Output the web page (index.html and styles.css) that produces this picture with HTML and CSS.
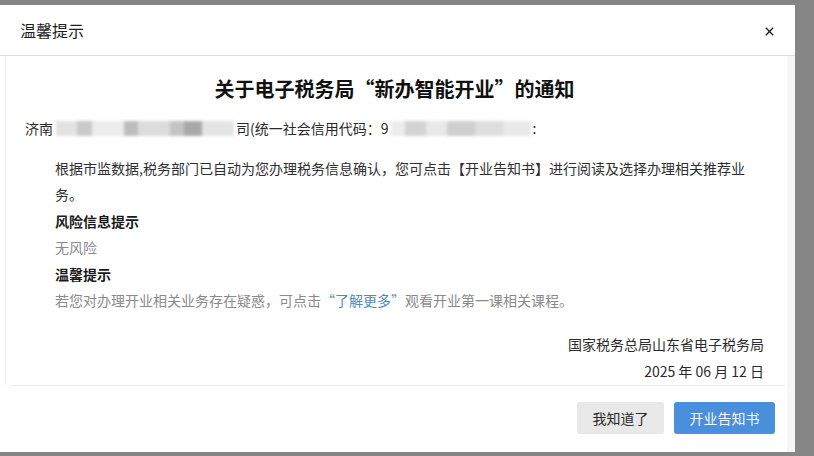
FILE: index.html
```html
<!DOCTYPE html>
<html lang="zh-CN">
<head>
<meta charset="utf-8">
<title>温馨提示</title>
<link rel="stylesheet" href="styles.css">
</head>
<body>
<div class="modal">
  <div class="modal-header">
    <span class="modal-title">温馨提示</span>
    <span class="close" aria-label="关闭">
      <svg width="9" height="9" viewBox="0 0 9 9"><path d="M0.8 0.8 L8.2 8.2 M8.2 0.8 L0.8 8.2" stroke="#222" stroke-width="1.4" fill="none"/></svg>
    </span>
  </div>
  <div class="modal-main">
    <div class="modal-body">
      <h1 class="notice-title">关于电子税务局“新办智能开业”的通知</h1>
      <div class="addressee">济南<span class="mosaic m1"></span>司(统一社会信用代码：9<span class="mosaic m2"></span>:</div>
      <div class="content">
        <p class="para">根据市监数据,税务部门已自动为您办理税务信息确认，您可点击【开业告知书】进行阅读及选择办理相关推荐业务。</p>
        <div class="label">风险信息提示</div>
        <div class="muted">无风险</div>
        <div class="label">温馨提示</div>
        <div class="muted">若您对办理开业相关业务存在疑惑，可点击<span class="link">“了解更多”</span>观看开业第一课相关课程。</div>
      </div>
      <div class="sign">
        <div>国家税务总局山东省电子税务局</div>
        <div>2025 年 06 月 12 日</div>
      </div>
    </div>
    <div class="modal-footer">
      <button class="btn btn-default">我知道了</button>
      <button class="btn btn-primary">开业告知书</button>
    </div>
  </div>
</div>
</body>
</html>
```

FILE: styles.css
```css
html, body {
  margin: 0;
  padding: 0;
}
body {
  background: #868686;
  width: 814px;
  height: 456px;
  overflow: hidden;
  padding-top: 5px;
  box-sizing: border-box;
  font-family: "Noto Sans CJK SC", "Noto Sans", sans-serif;
  color: #333;
}
.modal {
  width: 795px;
  height: 447px;
  background: #fff;
  display: flex;
  flex-direction: column;
}
.modal-header {
  height: 50px;
  border-bottom: 1px solid #dcdcdc;
  display: flex;
  align-items: center;
  justify-content: space-between;
  padding: 0 21px 0 20px;
}
.modal-title {
  font-size: 16px;
  color: #1e1e1e;
  line-height: 20px;
}
.close {
  display: flex;
  width: 9px;
  height: 9px;
  margin-top: 2px;
}
.modal-main {
  flex: 1;
  border-right: 8px solid #f6f6f6;
  display: flex;
  flex-direction: column;
}
.modal-body {
  margin: 0 0 0 5px;
  padding: 20px 23px 0 19px;
  border-left: 1px solid #f1f1f1;
}
.notice-title {
  margin: 0;
  font-size: 20px;
  line-height: 26px;
  font-weight: bold;
  color: #111;
  text-align: center;
}
.addressee {
  margin-top: 13px;
  font-size: 14px;
  line-height: 26px;
  color: #2a2a2a;
  display: flex;
  align-items: center;
}
.mosaic {
  display: inline-block;
  height: 15px;
  filter: blur(1.5px);
}
.m1 {
  width: 178px;
  margin: 0 2px 0 3px;
  background: linear-gradient(90deg, #e2e2e2 0 12%, #c9c9c9 12% 20%, #ececec 20% 38%, #bdbdbd 38% 46%, #dcdcdc 46% 64%, #c4c4c4 64% 72%, #a9a9a9 72% 82%, #e4e4e4 82% 100%);
}
.m2 {
  width: 140px;
  margin: 0 2px 0 2px;
  background: linear-gradient(90deg, #ececec 0 10%, #d3d3d3 10% 25%, #e8e8e8 25% 40%, #cfcfcf 40% 60%, #dedede 60% 80%, #e9e9e9 80% 100%);
}
.content {
  margin-top: 14px;
  padding-left: 30px;
  font-size: 14px;
  line-height: 26.4px;
}
.para {
  margin: 0;
  color: #2f2f2f;
}
.label {
  font-weight: bold;
  color: #1a1a1a;
}
.muted {
  color: #8a8a8a;
}
.link {
  color: #4f8db8;
}
.sign {
  margin-top: 18px;
  text-align: right;
  font-size: 14px;
  line-height: 27px;
  color: #2a2a2a;
}
.modal-footer {
  margin: 0 2px 0 10px;
  border-top: 1px solid #ececec;
  padding: 16px 10px 0 0;
  display: flex;
  justify-content: flex-end;
  gap: 10px;
}
.btn {
  height: 32px;
  border: none;
  border-radius: 3px;
  font-family: "Noto Sans CJK SC", sans-serif;
  font-size: 14px;
  padding: 0 15.5px;
  cursor: pointer;
}
.btn-default {
  background: #e8e8e8;
  color: #2a2a2a;
}
.btn-primary {
  background: #4a8fdc;
  color: #f4f8ff;
}
```
